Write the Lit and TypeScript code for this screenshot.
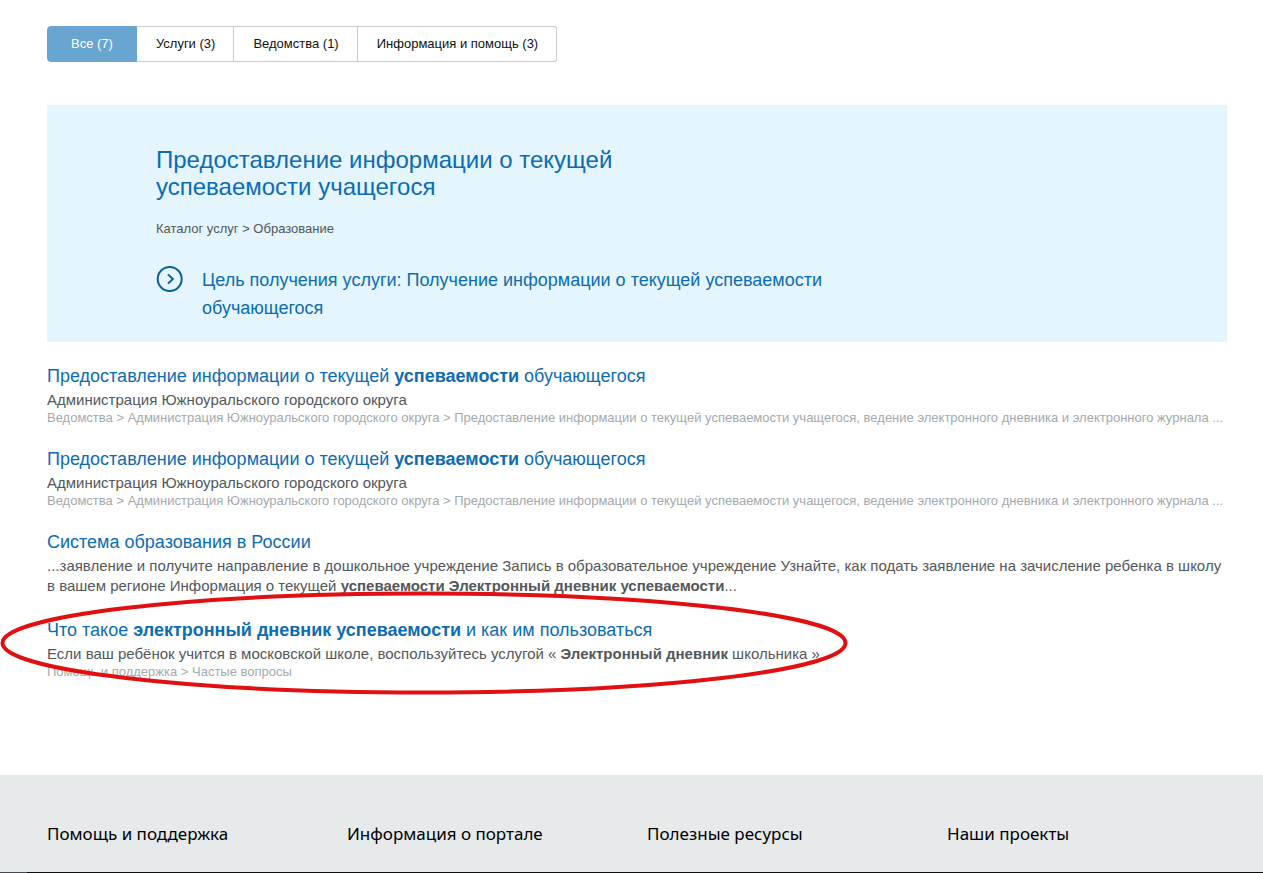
import { LitElement, html, css, nothing, TemplateResult } from "lit";
import { customElement, state } from "lit/decorators.js";
import { classMap } from "lit/directives/class-map.js";

interface Result {
  title: TemplateResult;
  text: TemplateResult;
  path?: string;
  marked?: boolean;
}

const TABS = ["Все (7)", "Услуги (3)", "Ведомства (1)", "Информация и помощь (3)"];

const SCHOOL: Result = {
  title: html`Предоставление информации о текущей <b>успеваемости</b> обучающегося`,
  text: html`Администрация Южноуральского городского округа`,
  path: "Ведомства > Администрация Южноуральского городского округа > Предоставление информации о текущей успеваемости учащегося, ведение электронного дневника и электронного журнала ...",
};

const RESULTS: Result[] = [
  SCHOOL,
  SCHOOL,
  {
    title: html`Система образования в России`,
    text: html`...заявление и получите направление в дошкольное учреждение Запись в образовательное учреждение Узнайте, как подать заявление на зачисление ребенка в школу в вашем регионе Информация о текущей <b>успеваемости Электронный дневник успеваемости</b>...`,
  },
  {
    title: html`Что такое <b>электронный дневник успеваемости</b> и как им пользоваться`,
    text: html`Если ваш ребёнок учится в московской школе, воспользуйтесь услугой « <b>Электронный дневник</b> школьника »`,
    path: "Помощь и поддержка > Частые вопросы",
    marked: true,
  },
];

const FOOTER = ["Помощь и поддержка", "Информация о портале", "Полезные ресурсы", "Наши проекты"];

@customElement("app-root")
export class AppRoot extends LitElement {
  @state() private active = 0;

  static styles = css`
    :host {
      display: flex;
      flex-direction: column;
      min-height: 100vh;
      background: #fff;
      color: #52575b;
      font-family: "Liberation Sans", Arial, sans-serif;
      overflow-x: hidden;
    }
    main {
      flex: 1;
      padding: 26px 36px 96px 47px;
    }
    a {
      color: #0d6cb0;
      text-decoration: none;
    }
    a:hover {
      text-decoration: underline;
    }
    .tabs {
      display: flex;
    }
    .tab {
      height: 36px;
      padding: 0 18px 1px 19px;
      border: 1px solid #c8ccce;
      border-left-width: 0;
      background: #fff;
      font: 13px/18px "Liberation Sans", Arial, sans-serif;
      color: #111;
      cursor: pointer;
    }
    .tab:first-child {
      padding: 0 23px 1px;
      border-left-width: 1px;
      border-radius: 4px 0 0 4px;
    }
    .tab:last-child {
      border-radius: 0 3px 3px 0;
    }
    .tab.active {
      border-color: #68a6d1;
      background: #68a6d1;
      color: #fff;
    }
    .panel {
      margin-top: 43px;
      padding: 41px 109px 20px;
      background: #e4f5fd;
    }
    .panel-title {
      max-width: 500px;
      margin: 0;
      font-size: 24px;
      line-height: 27px;
      font-weight: 400;
    }
    .panel-path {
      margin: 20px 0 0;
      font-size: 13px;
      line-height: 18px;
    }
    .goal {
      display: flex;
      gap: 18px;
      max-width: 680px;
      margin-top: 28px;
      font-size: 18px;
      line-height: 28px;
    }
    .goal svg {
      flex: none;
      width: 28px;
      height: 28px;
    }
    .results {
      display: grid;
      gap: 21px;
      margin-top: 21px;
    }
    .result {
      position: relative;
      min-width: 0;
    }
    .result-title {
      margin: 0 0 1px;
      font-size: 18px;
      line-height: 26px;
      font-weight: 400;
    }
    .result-text {
      margin: 0;
      font-size: 15px;
      line-height: 20px;
    }
    .result-path {
      margin: 0;
      overflow: hidden;
      white-space: nowrap;
      text-overflow: ellipsis;
      color: #a3a9ad;
      font-size: 13px;
      line-height: 15px;
    }
    .mark {
      position: absolute;
      left: -47px;
      top: -26px;
      width: 850px;
      height: 106px;
      pointer-events: none;
    }
    footer {
      display: grid;
      grid-template-columns: repeat(4, 1fr);
      padding: 46px 16px 26px 47px;
      background: #e6eaeb;
    }
    .footer-title {
      margin: 0;
      color: #000;
      font: 400 17px/25px "Noto Sans", "Open Sans", sans-serif;
    }
    .edge {
      height: 1px;
      background: linear-gradient(to right, #444a50 27px, #0b0d10 27px);
    }
  `;

  render() {
    return html`
      <main>
        <nav class="tabs" aria-label="Разделы">
          ${TABS.map(
            (label, i) => html`<button
              type="button"
              class=${classMap({ tab: true, active: i === this.active })}
              @click=${() => (this.active = i)}
            >${label}</button>`
          )}
        </nav>
        <section class="panel">
          <h2 class="panel-title">
            <a href="#">Предоставление информации о текущей успеваемости учащегося</a>
          </h2>
          <p class="panel-path">Каталог услуг &gt; Образование</p>
          <a class="goal" href="#">
            <svg viewBox="0 0 28 28" fill="none" stroke="#0b5f97" aria-hidden="true">
              <circle cx="13.7" cy="13" r="12" stroke-width="2" />
              <path d="M12 8.4 16.8 13 12 17.6" stroke-width="2" />
            </svg>
            <span>Цель получения услуги: Получение информации о текущей успеваемости обучающегося</span>
          </a>
        </section>
        <section class="results">
          ${RESULTS.map(
            (r) => html`<article class="result">
              <h3 class="result-title"><a href="#">${r.title}</a></h3>
              <p class="result-text">${r.text}</p>
              ${r.path ? html`<p class="result-path">${r.path}</p>` : nothing}
              ${r.marked
                ? html`<svg class="mark" viewBox="0 0 850 106" fill="none" aria-hidden="true">
                    <ellipse cx="424" cy="52" rx="421.5" ry="49.5" stroke="#e01010" stroke-width="4" />
                  </svg>`
                : nothing}
            </article>`
          )}
        </section>
      </main>
      <footer>
        ${FOOTER.map((t) => html`<h4 class="footer-title">${t}</h4>`)}
      </footer>
      <div class="edge"></div>
    `;
  }
}
